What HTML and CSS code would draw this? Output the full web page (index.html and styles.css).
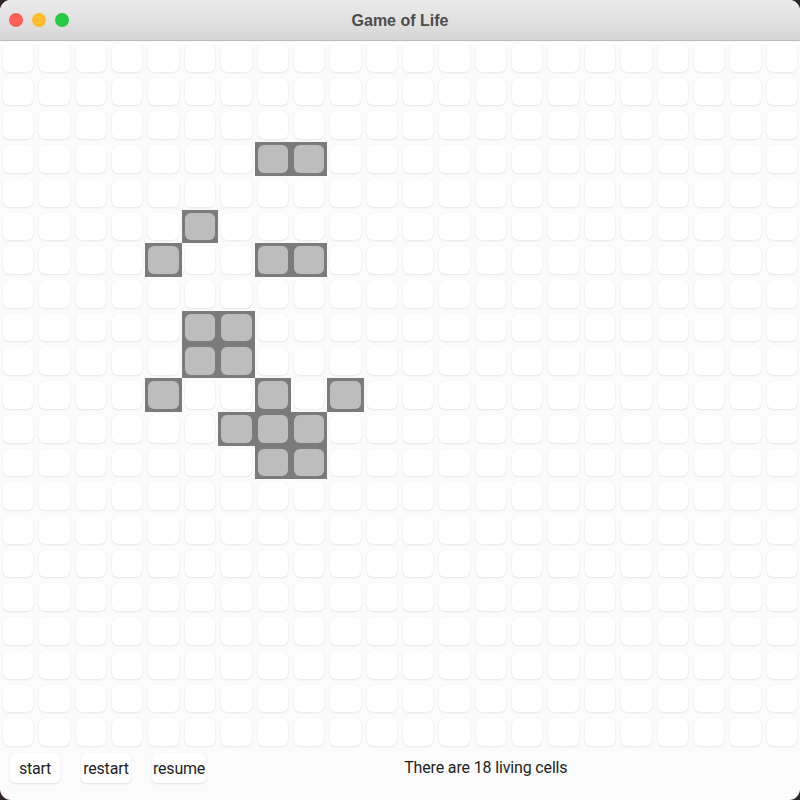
FILE: index.html
```html
<!DOCTYPE html>
<html>
<head>
<meta charset="utf-8">
<title>Game of Life</title>
<link rel="stylesheet" href="styles.css">
</head>
<body>
<div class="window">
  <div class="titlebar">
    <div class="lights">
      <span class="light red"></span>
      <span class="light yellow"></span>
      <span class="light green"></span>
    </div>
    <div class="title">Game of Life</div>
  </div>
  <div class="board" id="board"></div>
  <div class="footer">
    <div class="buttons">
      <button class="btn">start</button>
      <button class="btn">restart</button>
      <button class="btn">resume</button>
    </div>
    <div class="status">There are 18 living cells</div>
  </div>
</div>
<script src="script.js"></script>
</body>
</html>
```

FILE: styles.css
```css
* { box-sizing: border-box; }
html, body { margin: 0; padding: 0; }
body {
  width: 800px;
  height: 800px;
  background: #2e2622;
  font-family: Roboto, "Liberation Sans", Arial, sans-serif;
}
.window {
  width: 800px;
  height: 800px;
  background: #fbfbfb;
  border-radius: 11px;
  overflow: hidden;
  display: flex;
  flex-direction: column;
}
.titlebar {
  height: 41px;
  flex: none;
  background: linear-gradient(#ebebeb, #d6d6d6);
  border-bottom: 1px solid #bcbcbc;
  display: flex;
  align-items: center;
  justify-content: center;
  position: relative;
}
.lights {
  position: absolute;
  left: 9px;
  top: 13px;
  display: flex;
  gap: 9px;
}
.light {
  width: 14px;
  height: 14px;
  border-radius: 50%;
  display: block;
}
.red { background: #fe5e57; }
.yellow { background: #febc2e; }
.green { background: #28c840; }
.title {
  font-family: "Liberation Sans", Arial, sans-serif;
  font-weight: bold;
  font-size: 16px;
  color: #4b4b4b;
  padding-top: 1px;
}
.board {
  height: 708px;
  flex: none;
  display: grid;
  grid-template-columns: repeat(22, 1fr);
  grid-template-rows: repeat(21, 1fr);
  background: #fbfbfb;
}
.cell {
  padding: 3px;
  display: flex;
}
.cell .in {
  flex: 1;
  border-radius: 6px;
  background: #ffffff;
  box-shadow: 0 1px 2px rgba(0,0,0,0.08), 0 0 1px rgba(0,0,0,0.06);
}
.cell.alive {
  background: #7b7b7b;
}
.cell.alive .in {
  background: #bdbdbd;
  box-shadow: none;
}
.footer {
  flex: 1;
  display: flex;
  align-items: flex-start;
  padding: 4px 0 0 10px;
}
.buttons {
  display: flex;
  gap: 21px;
}
.btn {
  font-family: Roboto, "Liberation Sans", Arial, sans-serif;
  font-size: 16px;
  color: #1e1e1e;
  background: #ffffff;
  border: none;
  border-radius: 5px;
  box-shadow: 0 1px 2px rgba(0,0,0,0.1), 0 0 1px rgba(0,0,0,0.07);
  height: 30px;
  min-width: 50px;
  padding: 0 1px;
  text-align: center;
  letter-spacing: -0.2px;
}
.status {
  margin-left: 198px;
  font-size: 16px;
  color: #1e1e1e;
  line-height: 30px;
  letter-spacing: -0.15px;
}
```

FILE: script.js
```js
var alive = [
  [7,3],[8,3],
  [5,5],
  [4,6],[7,6],[8,6],
  [5,8],[6,8],
  [5,9],[6,9],
  [4,10],[7,10],[9,10],
  [6,11],[7,11],[8,11],
  [7,12],[8,12]
];
var set = {};
alive.forEach(function (p) { set[p[0] + ',' + p[1]] = true; });
var board = document.getElementById('board');
for (var r = 0; r < 21; r++) {
  for (var c = 0; c < 22; c++) {
    var d = document.createElement('div');
    d.className = 'cell' + (set[c + ',' + r] ? ' alive' : '');
    var i = document.createElement('div');
    i.className = 'in';
    d.appendChild(i);
    board.appendChild(d);
  }
}
```
